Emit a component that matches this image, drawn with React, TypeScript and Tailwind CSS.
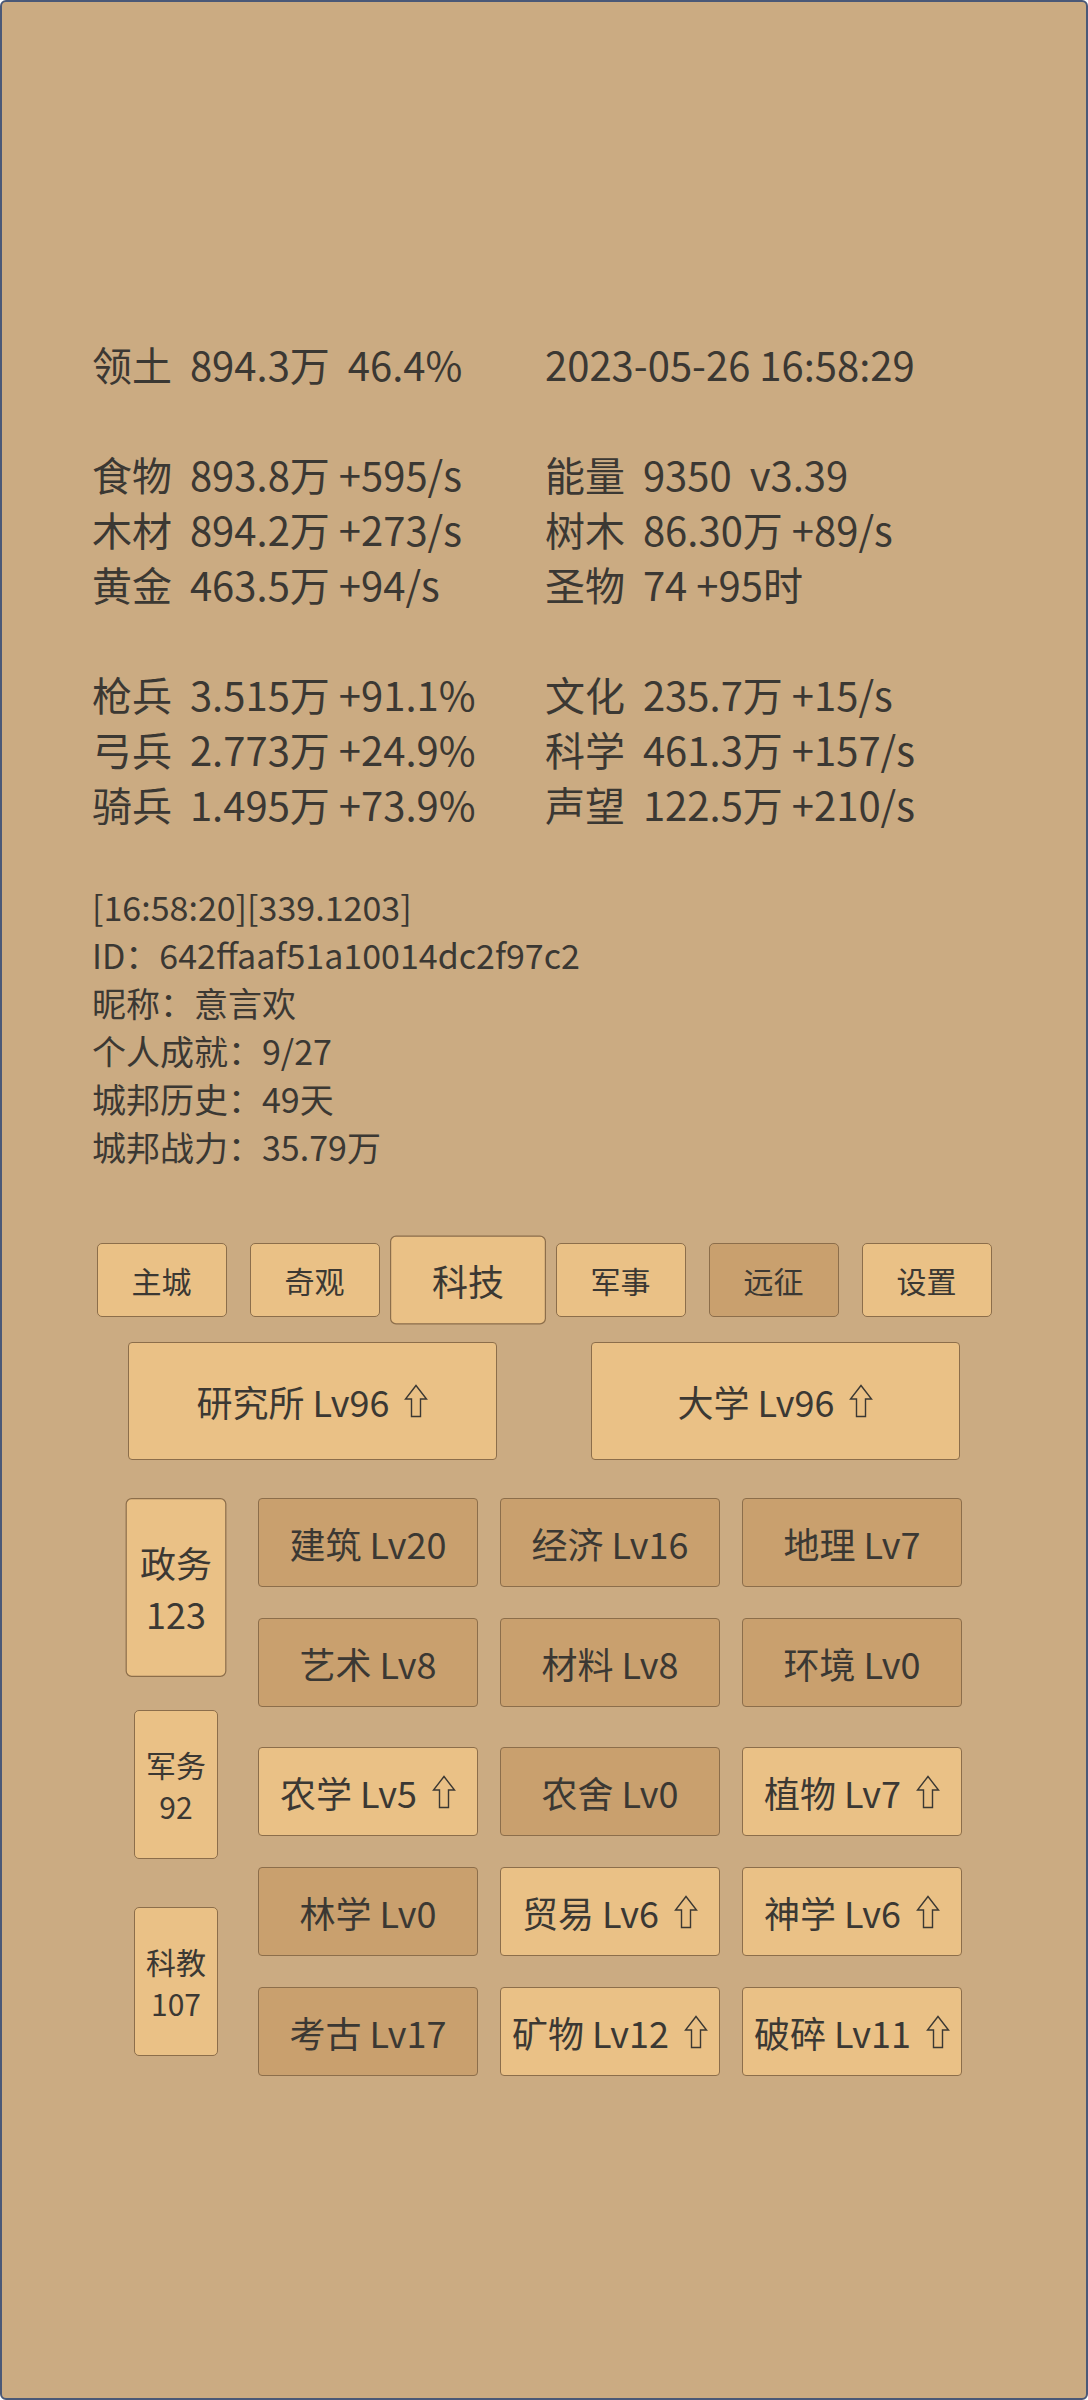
import React from 'react';

const stats: [string, string][] = [
  ['领土  894.3万  46.4%', '2023-05-26 16:58:29'],
  ['', ''],
  ['食物  893.8万 +595/s', '能量  9350  v3.39'],
  ['木材  894.2万 +273/s', '树木  86.30万 +89/s'],
  ['黄金  463.5万 +94/s', '圣物  74 +95时'],
  ['', ''],
  ['枪兵  3.515万 +91.1%', '文化  235.7万 +15/s'],
  ['弓兵  2.773万 +24.9%', '科学  461.3万 +157/s'],
  ['骑兵  1.495万 +73.9%', '声望  122.5万 +210/s'],
];

const info = [
  '[16:58:20][339.1203]',
  'ID：642ffaaf51a10014dc2f97c2',
  '昵称：意言欢',
  '个人成就：9/27',
  '城邦历史：49天',
  '城邦战力：35.79万',
];

const tabs = [
  { label: '主城' },
  { label: '奇观' },
  { label: '科技', active: true },
  { label: '军事' },
  { label: '远征', dark: true },
  { label: '设置' },
];

type Tech = { label: string; up?: boolean };

const techRows: Tech[][] = [
  [{ label: '建筑 Lv20' }, { label: '经济 Lv16' }, { label: '地理 Lv7' }],
  [{ label: '艺术 Lv8' }, { label: '材料 Lv8' }, { label: '环境 Lv0' }],
  [{ label: '农学 Lv5', up: true }, { label: '农舍 Lv0' }, { label: '植物 Lv7', up: true }],
  [{ label: '林学 Lv0' }, { label: '贸易 Lv6', up: true }, { label: '神学 Lv6', up: true }],
  [{ label: '考古 Lv17' }, { label: '矿物 Lv12', up: true }, { label: '破碎 Lv11', up: true }],
];

const sides = [
  { name: '政务', count: 123, active: true },
  { name: '军务', count: 92 },
  { name: '科教', count: 107 },
];

const UpArrow = () => (
  <svg width="24" height="34" viewBox="0 0 24 34" className="ml-[15px] shrink-0">
    <polygon
      points="12,1.5 22.5,15 16.5,15 16.5,32.5 7.5,32.5 7.5,15 1.5,15"
      fill="none"
      stroke="currentColor"
      strokeWidth="1.4"
    />
  </svg>
);

export default function App() {
  return (
    <div className="w-[1088px] h-[2400px] bg-[#cbab82] border-2 border-[#4a5877] rounded-[6px] overflow-hidden text-[#3b3833] font-['Noto_Sans_CJK_SC',sans-serif]">
      {/* resource stats */}
      <div className="pt-[335px] pl-[90px] text-[40px] leading-[55px]">
        {stats.map(([l, r], i) => (
          <div key={i} className="grid grid-cols-[453px_1fr] h-[55px] whitespace-pre">
            <span>{l}</span>
            <span>{r}</span>
          </div>
        ))}
      </div>

      {/* player info */}
      <div className="mt-[51px] pl-[90px] text-[34px] leading-[48px]">
        {info.map((t) => (
          <div key={t}>{t}</div>
        ))}
      </div>

      {/* top tabs */}
      <div className="mt-[72px] flex justify-center gap-[23px]">
        {tabs.map((t) => (
          <div
            key={t.label}
            className={`w-[130px] h-[74px] flex items-center justify-center rounded-[5px] border border-[#8c6e4b] text-[30px] ${
              t.dark ? 'bg-[#c9a06e]' : 'bg-[#eac186]'
            } ${t.active ? 'scale-[1.2]' : ''}`}
          >
            {t.label}
          </div>
        ))}
      </div>

      {/* buildings */}
      <div className="mt-[25px] flex justify-center gap-[94px]">
        {['研究所 Lv96', '大学 Lv96'].map((b) => (
          <div
            key={b}
            className="w-[369px] h-[118px] flex items-center justify-center rounded-[4px] border border-[#8c6e4b] bg-[#eac186] text-[36px]"
          >
            <span className="whitespace-pre">{b}</span>
            <UpArrow />
          </div>
        ))}
      </div>

      {/* tech tree */}
      <div className="mt-[38px] pl-[132px] flex">
        <div className="w-[84px] pt-[15px] flex flex-col gap-[48px]">
          {sides.map((s) => (
            <div
              key={s.name}
              className={`h-[149px] flex flex-col items-center justify-center rounded-[5px] border border-[#8c6e4b] bg-[#eac186] text-[30px] leading-[42px] ${
                s.active ? 'scale-[1.2]' : ''
              }`}
            >
              <span>{s.name}</span>
              <span>{s.count}</span>
            </div>
          ))}
        </div>

        <div className="ml-[40px] flex flex-col gap-[31px]">
          {techRows.map((row, ri) => (
            <div key={ri} className={`grid grid-cols-[220px_220px_220px] gap-x-[22px] ${ri === 2 ? 'mt-[9px]' : ''}`}>
              {row.map((t) => (
                <div
                  key={t.label}
                  className={`h-[89px] flex items-center justify-center rounded-[4px] border border-[#8c6e4b] text-[36px] ${
                    t.up ? 'bg-[#eac186]' : 'bg-[#c9a06e]'
                  }`}
                >
                  <span className="whitespace-pre">{t.label}</span>
                  {t.up && <UpArrow />}
                </div>
              ))}
            </div>
          ))}
        </div>
      </div>
    </div>
  );
}
